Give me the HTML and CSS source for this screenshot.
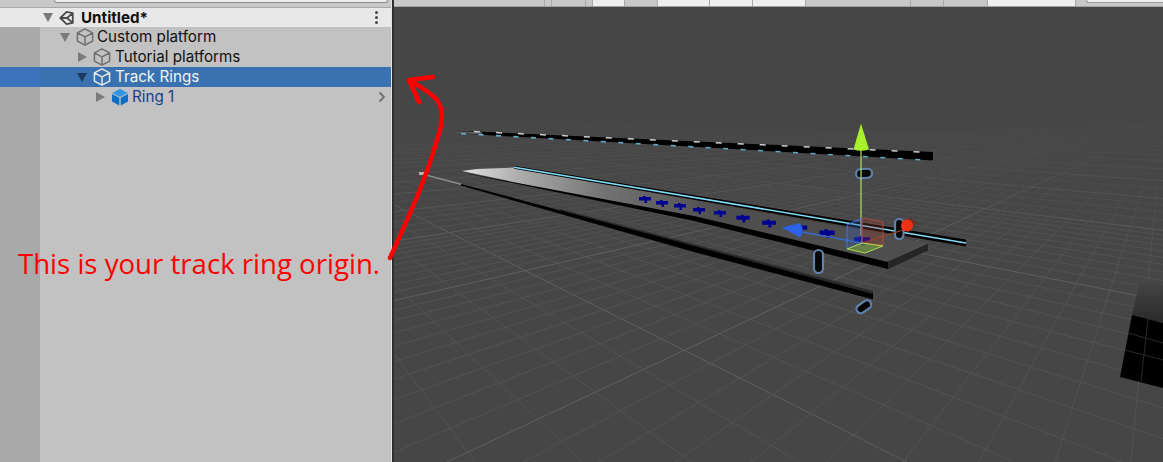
FILE: index.html
```html
<!DOCTYPE html>
<html lang="en">
<head>
<meta charset="utf-8">
<title>Track ring origin</title>
<link rel="stylesheet" href="styles.css">
</head>
<body>
<svg width="0" height="0" class="defs" aria-hidden="true">
  <symbol id="cube" viewBox="0 0 18 18">
    <path d="M9 .9 16.600 4.900v8.200L9 17.100 1.400 13.100V4.900Z M1.400 4.900 9 8.900l7.600-4 M9 8.900v8.200" fill="none" stroke="currentColor" stroke-width="1.500" stroke-linejoin="round"/>
  </symbol>
</svg>
<div class="app">
  <aside class="hierarchy">
    <div class="searchbar"><div class="searchfield"></div></div>
    <div class="scene-header">
      <span class="slot"><i class="arrow down grey"></i></span>
      <svg class="unity" viewBox="0 0 18 18"><path d="M8.500 2 15.500 3.500 15.500 14.500 8.500 16 1.500 9Z M1.500 9H9 M9 9l6.500-5.500 M9 9l6.500 5.500" fill="none" stroke="#4a4a4a" stroke-width="2" stroke-linejoin="round"/></svg>
      <span class="scene-title">Untitled*</span>
      <span class="kebab"><i></i><i></i><i></i></span>
    </div>
    <div class="tree">
      <div class="row lvl1"><span class="slot"><i class="arrow down grey"></i></span><svg class="cube"><use href="#cube"/></svg><span class="name">Custom platform</span></div>
      <div class="row lvl2"><span class="slot"><i class="arrow right grey"></i></span><svg class="cube"><use href="#cube"/></svg><span class="name">Tutorial platforms</span></div>
      <div class="row lvl2 selected"><span class="slot"><i class="arrow down navy"></i></span><svg class="cube"><use href="#cube"/></svg><span class="name">Track Rings</span></div>
      <div class="row lvl3 prefab">
        <span class="slot"><i class="arrow right grey"></i></span>
        <svg class="cube" viewBox="0 0 18 18"><path d="M9 .8 16.800 5 9 9 1.200 5Z" fill="#2f93e6"/><path d="M1 6l7.300 3.800V17.500L1 13.500Z" fill="#0f6fc6"/><path d="M17 6 9.700 9.800V17.500L17 13.500Z" fill="#0f6fc6"/></svg>
        <span class="name">Ring 1</span>
        <svg class="chev" viewBox="0 0 8 12"><path d="M1.500 1.500 6 6l-4.500 4.500" fill="none" stroke="#6e6e6e" stroke-width="1.800"/></svg>
      </div>
    </div>
  </aside>
  <div class="divider"></div>
  <main class="scene">
    <div class="toolbar">
      <i class="tb w151"></i><i class="tb w7"></i><i class="tb w34"></i><i class="tb w7b"></i><i class="tb on w32"></i><i class="tb w33"></i><i class="tb on w52"></i><i class="tb on w43"></i><i class="tb on w53"></i><i class="tb w105"></i><i class="tb w33"></i><i class="tb w44"></i><i class="tb on w88"></i><i class="tb plain w10"></i><i class="field"></i>
    </div>
    <svg class="view" viewBox="394 7 769 455" preserveAspectRatio="none">
      <defs>
        <linearGradient id="plate" gradientUnits="userSpaceOnUse" x1="462" y1="170" x2="720" y2="222">
          <stop offset="0" stop-color="#e2e2e2"/><stop offset=".22" stop-color="#acacac"/><stop offset=".55" stop-color="#727272"/><stop offset="1" stop-color="#4e4e4e"/>
        </linearGradient>
        <linearGradient id="horizon" x1="0" x2="0" y1="0" y2="1">
          <stop offset="0" stop-color="#464646"/><stop offset=".35" stop-color="#464646" stop-opacity=".72"/><stop offset="1" stop-color="#464646" stop-opacity="0"/>
        </linearGradient>
        <linearGradient id="planeTop" x1="0" x2="0" y1="0" y2="1">
          <stop offset="0" stop-color="#464646"/><stop offset="1" stop-color="#2a2a2a"/>
        </linearGradient>
        <path id="blk" d="M-6-2h4v-1h2.500v1H6v3.500H2V4H-.5V1.500H-6Z"/>
      </defs>
      <rect x="394" y="7" width="769" height="455" fill="#464646"/>

      <!-- ground grid: family running down-right -->
      <path class="minor" d="M215 115L367 462M215 115L475 462M215 115L583 462M215 115L691 462M215 115L799 462M215 115L1015 462M215 115L1123 462M215 115L1231 462M215 115L1339 462M215 115L1447 462M215 115L1555 462M215 115L1663 462M215 115L1771 462M215 115L1879 462M215 115L2095 462M215 115L2203 462M215 115L2311 462M215 115L2419 462M215 115L2527 462M215 115L2635 462M215 115L2743 462M215 115L2851 462M215 115L2959 462M215 115L3337 462M215 115L3607 462M215 115L3877 462M215 115L4687 462M215 115L5767 462"/>
      <path class="major" d="M215 115L907 462M215 115L1987 462M215 115L3067 462M215 115L4147 462M215 115L5227 462M215 115L6307 462M215 115L7387 462M215 115L8467 462M215 115L9547 462M215 115L10627 462M215 115L11707 462M215 115L12787 462M215 115L13867 462"/>
      <!-- ground grid: family running up-right -->
      <path class="minor" d="M1163 125L1131 462M1163 125L1055 462M1163 125L979 462M1163 125L903 462M1163 125L827 462M1163 125L751 462M1163 125L675 462M1163 125L599 462M1163 125L523 462M1163 125L371 462M1163 125L295 462M1163 125L219 462M1163 125L143 462M1163 125L67 462M1163 125L-9 462M1163 125L-85 462M1163 125L-161 462M1163 125L-237 462M1163 125L-389 462M1163 125L-465 462M1163 125L-541 462M1163 125L-617 462M1163 125L-693 462M1163 125L-769 462M1163 125L-845 462M1163 125L-921 462M1163 125L-997 462M1163 125L-1225 462M1163 125L-1377 462M1163 125L-1529 462M1163 125L-1681 462M1163 125L-2213 462M1163 125L-2973 462"/>
      <path class="major" d="M1163 125L447 462M1163 125L-313 462M1163 125L-1073 462M1163 125L-1833 462M1163 125L-2593 462M1163 125L-3353 462M1163 125L-4113 462M1163 125L-4873 462M1163 125L-5633 462M1163 125L-6393 462M1163 125L-7913 462M1163 125L-9433 462M1163 125L-11713 462"/>
      <rect x="394" y="7" width="769" height="110" fill="#464646"/>
      <rect x="394" y="116" width="769" height="130" fill="url(#horizon)"/>

      <!-- corner plane -->
      <path d="M1132 315 1140 280 1163 285 1163 323Z" fill="url(#planeTop)"/>
      <path d="M1120 377 1132 315 1163 323 1163 388Z" fill="#000"/>
      <path class="plane-lines" d="M1128 333 1163 343M1125 350 1163 360M1148 319 1141 381"/>

      <!-- back strip -->
      <path d="M457 131.500 477 131.500 933 152 933 160.500 477 134.500 457 133Z" fill="#000"/>
      <path d="M457 131.500 482 132 482 134.500 457 133Z" fill="#5e5e5e"/>
      <path class="dash-white" d="M474 131.600 933 152.600"/>
      <path class="dash-cyan" d="M461 133.600 933 160.500"/>

      <!-- wide plate -->
      <path d="M462 171 477 169 514 167.500 928 243 888 263Z" fill="url(#plate)"/>
      <path d="M462 172.500 694 216 888 262 928 244 928 250 888 269 694 221Z" fill="#000"/>
      <path d="M888 262 928 244 928 250 888 269Z" fill="#262626"/>

      <!-- front strip -->
      <path d="M560 209 873 291 873 296 560 212Z" fill="#2a2a2a"/>
      <path d="M461 184 694 246 873 294 873 299.500 694 252 461 185.500Z" fill="#000"/>
      <path d="M421 173 461 183.500 461 185 421 174.500Z" fill="#8e8e8e"/>
      <rect x="419" y="172" width="6" height="3" fill="#b4b4b4"/>

      <!-- ring line -->
      <path d="M514 165.800 966 239.500 966 246.500 514 168.800Z" fill="#000"/>
      <path class="ring-line" d="M514 167.200 966 243"/>

      <!-- ring blocks -->
      <g class="blocks">
        <use href="#blk" transform="translate(645 199)"/>
        <use href="#blk" transform="translate(662 203)"/>
        <use href="#blk" transform="translate(680 206)"/>
        <use href="#blk" transform="translate(699 210)"/>
        <use href="#blk" transform="translate(720 213)"/>
        <use href="#blk" transform="translate(743 218) scale(1.100)"/>
        <use href="#blk" transform="translate(769 223) scale(1.150)"/>
        <use href="#blk" transform="translate(800 228) scale(1.200)"/>
        <use href="#blk" transform="translate(827 233) scale(1.250)"/>
        <use href="#blk" transform="translate(862 240) scale(1.350)"/>
      </g>

      <!-- selected outlines -->
      <g class="ring-icons">
        <rect x="856" y="169" width="16" height="9" rx="4.500" transform="rotate(-4 864 173)"/>
        <rect x="895" y="219" width="8.500" height="20" rx="4.200"/>
        <rect x="814" y="250" width="9" height="23" rx="4.500"/>
        <rect x="856" y="302.500" width="16" height="8.500" rx="4.200" transform="rotate(-35 864 307)"/>
      </g>

      <!-- transform gizmo -->
      <path d="M861 150V236" stroke="#b3e36a" stroke-width="1.200"/>
      <path d="M861 123.500 869 149.500Q861 152 853.500 149.500Z" fill="#a8f02c"/>
      <path d="M802 232 862 243" stroke="#3b67c8" stroke-width="1.400"/>
      <path d="M782 227.500 800 223Q805 230 800 237.500Z" fill="#2d62e8"/>
      <path d="M903 230 862 243" stroke="#a5442c" stroke-width="1.200"/>
      <path d="M908 218 917 222 908 232Z" fill="#7a2a1c"/>
      <circle cx="907" cy="225.500" r="6" fill="#ee3312"/>
      <path class="box-blue" d="M847 225 862 218 862 243 847 249Z"/>
      <path class="box-red" d="M862 218 883 222 883 245 862 243Z"/>
      <path class="box-green" d="M847 249 862 243 883 246 865 253Z"/>
    </svg>
  </main>
  <div class="annotation">
    <svg class="scribble" viewBox="380 70 70 200"><path d="M390 258C399 238 409 216 417 197 424 179 431 162 437 140 443 122 444 110 437 100 430 92 419 86 409 80M409 80 433 77M409 80 419 102" fill="none" stroke="#fe0000" stroke-width="4.500" stroke-linecap="round" stroke-linejoin="round"/></svg>
    <p class="note">This is your track ring origin.</p>
  </div>
</div>
</body>
</html>
```

FILE: styles.css
```css
* { box-sizing: border-box; }
html, body { margin: 0; height: 100%; }
body { overflow: hidden; font-family: "Inter", "Noto Sans", sans-serif; }
.defs { position: absolute; }
.app { position: relative; display: flex; width: 1163px; height: 462px; }

.hierarchy { width: 391px; display: flex; flex-direction: column; background: #c2c2c2; }
.searchbar { height: 8px; background: #c8c8c8; border-bottom: 1px solid #a8a8a8; padding: 0 3px 0 54px; }
.searchfield { height: 3px; background: #ededed; border: 1px solid #8e8e8e; border-top: 0; border-radius: 0 0 5px 5px; }
.scene-header { height: 19px; background: #e8e8e8; display: flex; align-items: center; padding: 0 13px 0 37px; }
.unity { width: 16px; height: 16px; margin: 0 6px 0 0; flex: none; }
.scene-title { font-size: 15.200px; font-weight: 700; color: #111; flex: 1; padding-bottom: 1px; }
.kebab { display: flex; flex-direction: column; gap: 2px; }
.kebab i { width: 3px; height: 3px; border-radius: 50%; background: #444; }

.tree { flex: 1; background: linear-gradient(90deg, #a9a9a9 40px, #c2c2c2 40px); }
.row { height: 20px; display: flex; align-items: center; font-size: 15.200px; color: #111; }
.lvl1 { padding-left: 54px; }
.lvl2 { padding-left: 71px; }
.lvl3 { padding-left: 89px; }
.name { margin-left: 3px; padding-bottom: 1px; }
.lvl2 .name { margin-left: 4px; }
.selected { background: linear-gradient(90deg, #3d72bd 40px, #3a72b1 40px); color: #f2f2f2; }
.prefab { color: #14418c; }
.cube { width: 18px; height: 18px; color: #6f6f6f; flex: none; }
.selected .cube { color: #e6e6e6; }
.chev { width: 8px; height: 12px; margin-left: auto; margin-right: 5px; }

.slot { width: 22px; display: flex; justify-content: center; align-items: center; flex: none; }
.arrow { display: block; width: 0; height: 0; }
.arrow.down { border-left: 5px solid transparent; border-right: 5px solid transparent; border-top: 9px solid; }
.arrow.right { border-top: 5px solid transparent; border-bottom: 5px solid transparent; border-left: 9px solid; }
.arrow.grey { color: #7b7b7b; }
.arrow.navy { color: #1e3a5e; }

.divider { width: 3px; background: linear-gradient(90deg, #e2e2e2 1px, #2a2a2a 1px, #2a2a2a 2px, #333 2px); }

.scene { flex: 1; display: flex; flex-direction: column; min-width: 0; }
.toolbar { height: 7px; display: flex; background: #c8c8c8; border-bottom: 1px solid #a0a0a0; }
.tb { display: block; height: 100%; border-right: 1px solid #a8a8a8; flex: none; }
.tb.on { background: #efefef; }
.tb.plain { border-right: 0; }
.w151 { width: 151px; } .w7 { width: 7px; } .w34 { width: 34px; } .w7b { width: 7px; } .w32 { width: 32px; } .w33 { width: 33px; } .w52 { width: 52px; } .w43 { width: 43px; } .w53 { width: 53px; } .w105 { width: 105px; } .w44 { width: 44px; } .w88 { width: 88px; } .w10 { width: 10px; }
.field { display: block; flex: 1; height: 3px; background: #efefef; border: 1px solid #999; border-top: 0; border-right: 0; border-bottom-left-radius: 5px; }
.view { flex: 1; display: block; width: 100%; min-height: 0; }

.minor { fill: none; stroke: #525252; stroke-width: 1; }
.major { fill: none; stroke: #5f5f5f; stroke-width: 1; }
.plane-lines { fill: none; stroke: #2a2a2a; }
.dash-white { fill: none; stroke: #cfcfcf; stroke-width: 1.500; stroke-dasharray: 6 16; }
.dash-cyan { fill: none; stroke: #5fa8c4; stroke-width: 1.600; stroke-dasharray: 5 12.500; }
.ring-line { fill: none; stroke: #7fdcf8; stroke-width: 1.600; }
.blocks { fill: #01018f; }
.ring-icons rect { fill: #050505; stroke: #5f82ab; stroke-width: 2.200; }
.box-blue { fill: #3a5cb0; fill-opacity: .35; stroke: #3f74e6; }
.box-red { fill: #a03c30; fill-opacity: .3; stroke: #b0483c; }
.box-green { fill: #7da83f; fill-opacity: .55; stroke: #a9dd4f; }

.annotation { position: absolute; inset: 0; pointer-events: none; }
.scribble { position: absolute; left: 380px; top: 70px; width: 70px; height: 200px; }
.note { position: absolute; left: 18px; top: 245px; margin: 0; font-family: "Open Sans", "Noto Sans", sans-serif; font-size: 27.600px; line-height: 36px; color: #fe0000; white-space: nowrap; }
```
